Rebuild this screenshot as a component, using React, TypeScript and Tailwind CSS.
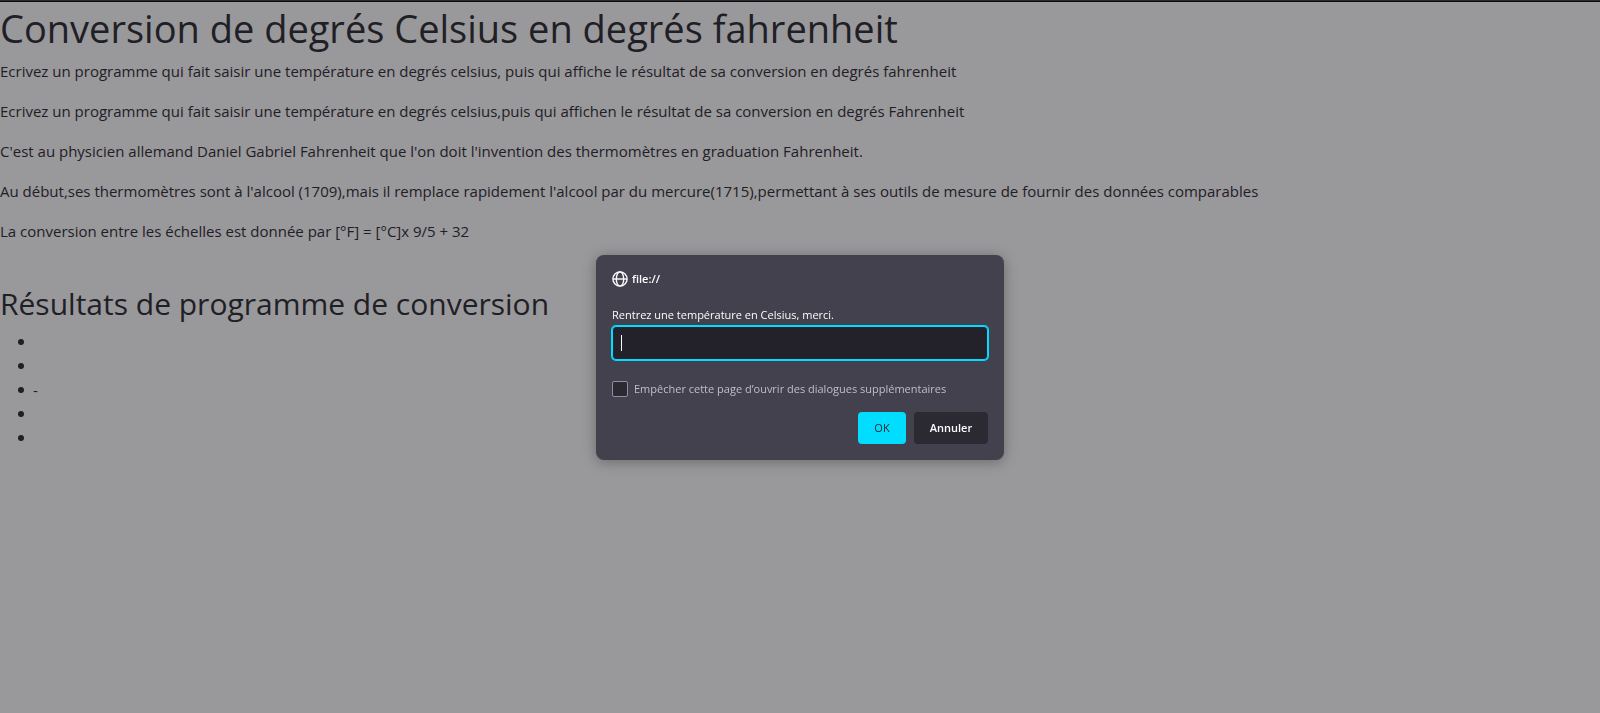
import { useState } from "react";

const paragraphs = [
  "Ecrivez un programme qui fait saisir une température en degrés celsius, puis qui affiche le résultat de sa conversion en degrés fahrenheit",
  "Ecrivez un programme qui fait saisir une température en degrés celsius,puis qui affichen le résultat de sa conversion en degrés Fahrenheit",
  "C'est au physicien allemand Daniel Gabriel Fahrenheit que l'on doit l'invention des thermomètres en graduation Fahrenheit.",
  "Au début,ses thermomètres sont à l'alcool (1709),mais il remplace rapidement l'alcool par du mercure(1715),permettant à ses outils de mesure de fournir des données comparables",
  "La conversion entre les échelles est donnée par [°F] = [°C]x 9/5 + 32",
];

const results = ["", "", "-", "", ""];

function GlobeIcon() {
  return (
    <svg viewBox="0 0 16 16" className="size-4 shrink-0" fill="none" stroke="currentColor" strokeWidth="1.4" aria-hidden="true">
      <circle cx="8" cy="8" r="7.1" />
      <ellipse cx="8" cy="8" rx="3.7" ry="7.1" />
      <path d="M1 8h14" />
    </svg>
  );
}

function PromptDialog() {
  const [value, setValue] = useState("");
  const [blocked, setBlocked] = useState(false);
  return (
    <div className="fixed inset-0 flex items-center justify-center pt-[2px]">
      <form
        role="dialog"
        aria-label="file://"
        onSubmit={(e) => e.preventDefault()}
        className="w-[408px] rounded-lg bg-[#42414d] p-4 text-[11px] leading-4 text-[#fbfbfe] shadow-[0_2px_14px_rgba(0,0,0,0.3)]"
      >
        <div className="flex items-center gap-1 font-semibold">
          <GlobeIcon />
          <span>file://</span>
        </div>
        <label htmlFor="temperature" className="mt-5 block">
          Rentrez une température en Celsius, merci.
        </label>
        <div className="relative mt-[3px] flex">
          <input
            id="temperature"
            type="text"
            value={value}
            onChange={(e) => setValue(e.target.value)}
            className="h-[34px] w-full rounded-[4px] border border-[#00ddff] bg-[#23222b] px-2 caret-transparent ring-1 ring-[#00ddff] outline-none focus:caret-[#fbfbfe]"
          />
          {value === "" && <span className="pointer-events-none absolute top-[9px] left-[9px] h-4 w-px bg-[#fbfbfe]" />}
        </div>
        <div className="mt-[21px] flex items-center gap-1.5 text-[#bfbfc9]">
          <input
            id="block"
            type="checkbox"
            checked={blocked}
            onChange={(e) => setBlocked(e.target.checked)}
            className="size-4 appearance-none rounded-[2px] border border-[#8f8f9d] bg-[#2b2a33] checked:bg-[#00ddff]"
          />
          <label htmlFor="block">Empêcher cette page d’ouvrir des dialogues supplémentaires</label>
        </div>
        <div className="mt-[15px] flex justify-end gap-2">
          <button type="submit" className="h-8 w-12 rounded-[4px] bg-[#00ddff] font-medium text-[#2b2a33]">
            OK
          </button>
          <button type="button" className="h-8 w-[74px] rounded-[4px] bg-[#2b2a33] font-semibold">
            Annuler
          </button>
        </div>
      </form>
    </div>
  );
}

export default function App() {
  return (
    <div className="min-h-screen border-t border-[#2b2a33] bg-[#99989b] font-['Segoe_UI','Open_Sans',sans-serif] text-[#1f2026]">
      <main className="border-t border-[#0c0c0d] pt-[2px] text-[15px] leading-6">
        <h1 className="mb-[7px] text-[38px] leading-[48px]">Conversion de degrés Celsius en degrés fahrenheit</h1>
        {paragraphs.map((text) => (
          <p key={text} className="mb-4">
            {text}
          </p>
        ))}
        <h2 className="mt-[42px] mb-[7px] text-[30px] leading-[38px]">Résultats de programme de conversion</h2>
        <ul className="pl-[18px]">
          {results.map((result, i) => (
            <li
              key={i}
              className="flex min-h-6 items-center gap-[9px] before:size-[6px] before:rounded-full before:bg-[#1f2026] before:content-['']"
            >
              {result}
            </li>
          ))}
        </ul>
      </main>
      <PromptDialog />
    </div>
  );
}
